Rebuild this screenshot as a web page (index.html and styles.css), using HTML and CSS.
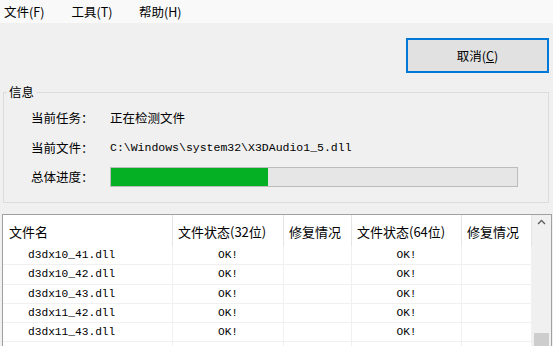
FILE: index.html
```html
<!DOCTYPE html>
<html lang="zh-CN">
<head>
  <meta charset="UTF-8" />
  <link rel="stylesheet" href="styles.css">
  <title>DirectX 修复工具</title>
</head>
<body>
  <!-- Menu bar -->
  <div class="menubar">
    <span>文件(F)</span>
    <span>工具(T)</span>
    <span>帮助(H)</span>
  </div>

  <!-- Toolbar -->
  <div class="toolbar">
    <button class="btn-cancel">取消(<u>C</u>)</button>
  </div>

  <!-- Info group -->
  <fieldset class="info">
    <legend>信息</legend>
    <div class="info-body">
      <div class="row">
        <span class="label">当前任务：</span>
        <span>正在检测文件</span>
      </div>
      <div class="row">
        <span class="label">当前文件：</span>
        <span class="mono">C:\Windows\system32\X3DAudio1_5.dll</span>
      </div>
      <div class="row">
        <span class="label">总体进度：</span>
        <div class="progress"><div class="progress-fill" style="width: 38.6%"></div></div>
      </div>
    </div>
  </fieldset>

  <!-- File list -->
  <div class="list-box">
    <div class="list">
      <div class="head">文件名</div>
      <div class="head">文件状态(32位)</div>
      <div class="head">修复情况</div>
      <div class="head">文件状态(64位)</div>
      <div class="head">修复情况</div>

      <div class="cell name">d3dx10_41.dll</div>
      <div class="cell ok">OK!</div>
      <div class="cell"></div>
      <div class="cell ok">OK!</div>
      <div class="cell"></div>

      <div class="cell name">d3dx10_42.dll</div>
      <div class="cell ok">OK!</div>
      <div class="cell"></div>
      <div class="cell ok">OK!</div>
      <div class="cell"></div>

      <div class="cell name">d3dx10_43.dll</div>
      <div class="cell ok">OK!</div>
      <div class="cell"></div>
      <div class="cell ok">OK!</div>
      <div class="cell"></div>

      <div class="cell name">d3dx11_42.dll</div>
      <div class="cell ok">OK!</div>
      <div class="cell"></div>
      <div class="cell ok">OK!</div>
      <div class="cell"></div>

      <div class="cell name">d3dx11_43.dll</div>
      <div class="cell ok">OK!</div>
      <div class="cell"></div>
      <div class="cell ok">OK!</div>
      <div class="cell"></div>

      <div class="cell name">d3dx9_24.dll</div>
      <div class="cell ok">OK!</div>
      <div class="cell"></div>
      <div class="cell ok">OK!</div>
      <div class="cell"></div>
    </div>

    <!-- Scrollbar -->
    <div class="scrollbar">
      <div class="scroll-up">
        <svg width="9" height="6" viewBox="0 0 9 6"><path d="M1 5 L4.5 1.5 L8 5" fill="none" stroke="#606060" stroke-width="1.4"/></svg>
      </div>
      <div class="scroll-thumb"></div>
    </div>
  </div>
</body>
</html>
```

FILE: styles.css
```css
/* Reset */
* {
  margin: 0;
  padding: 0;
  box-sizing: border-box;
}

body {
  width: 553px;
  height: 346px;
  overflow: hidden;
  background-color: #f0f0f0;
  font-family: "Noto Sans CJK SC", "Microsoft YaHei", sans-serif;
  font-size: 12.5px;
  color: #000;
}

/* Menu bar */
.menubar {
  height: 23px;
  background-color: #f9f9f9;
  display: flex;
  align-items: center;
  padding-left: 4px;
}

.menubar span {
  width: 67.5px;
  line-height: 16px;
}

/* Toolbar */
.toolbar {
  display: flex;
  justify-content: flex-end;
  padding: 15px 4px 0 0;
}

.btn-cancel {
  width: 143px;
  height: 35px;
  border: 2px solid #0078d7;
  background-color: #e1e1e1;
  font-family: inherit;
  font-size: 12.5px;
  color: #000;
}

/* Info group */
.info {
  margin: 11px 4px 0 3px;
  border: 1px solid #dcdcdc;
  padding: 3px 0 10.5px 0;
}

.info legend {
  margin-left: 3px;
  padding: 0 2px;
  line-height: 16px;
}

.info-body {
  padding-left: 27px;
}

.row {
  height: 29.5px;
  display: flex;
  align-items: center;
}

.label {
  width: 79px;
  flex-shrink: 0;
}

.mono {
  font-family: "Liberation Mono", monospace;
  font-size: 11.5px;
}

.progress {
  width: 408px;
  height: 20px;
  border: 1px solid #bcbcbc;
  background-color: #e6e6e6;
}

.progress-fill {
  height: 100%;
  background-color: #06b025;
}

/* File list */
.list-box {
  margin: 11px 1px 0 2px;
  border: 1px solid #a0a0a0;
  display: flex;
  height: 140px;
}

.list {
  flex: 1;
  background-color: #fff;
  display: grid;
  grid-template-columns: 170px 111px 68px 110px 1fr;
  grid-template-rows: 31px;
  grid-auto-rows: 19.3px;
  overflow: hidden;
}

.head {
  display: flex;
  align-items: center;
  padding: 1px 0 0 5px;
  border-right: 1px solid #e5e5e5;
  font-size: 13px;
}

.head:first-child {
  padding-left: 6px;
}

.cell {
  display: flex;
  align-items: center;
  border-right: 1px solid #f0f0f0;
  border-bottom: 1px solid #f0f0f0;
  font-family: "Liberation Mono", monospace;
  font-size: 11.2px;
}

.cell.name {
  padding-left: 25px;
}

.cell.ok {
  justify-content: center;
}

/* Scrollbar */
.scrollbar {
  width: 19px;
  background-color: #f0f0f0;
  display: flex;
  flex-direction: column;
  align-items: center;
}

.scroll-up {
  height: 17px;
  width: 100%;
  display: flex;
  align-items: center;
  justify-content: center;
  padding-top: 4px;
}

.scroll-thumb {
  margin-top: 108px;
  width: 15px;
  height: 60px;
  background-color: #cdcdcd;
}
```
